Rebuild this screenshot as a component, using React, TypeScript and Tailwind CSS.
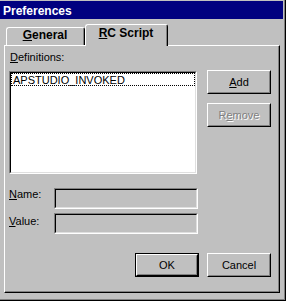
import React from "react";

const font = "font-['Liberation_Sans',Arial,sans-serif]";

function Sunken({ className, children }: { className: string; children?: React.ReactNode }) {
  return (
    <div className={`border border-t-[#808080] border-l-[#808080] border-b-white border-r-white ${className}`}>
      <div className="h-full border border-t-black border-l-black border-b-[#dfdfdf] border-r-[#dfdfdf]">
        {children}
      </div>
    </div>
  );
}

function Button({ children, isDefault }: { children: React.ReactNode; isDefault?: boolean }) {
  const face = (
    <div className="h-full border border-t-white border-l-white border-b-black border-r-black">
      <div className="h-full border border-t-[#c0c0c0] border-l-[#c0c0c0] border-b-[#808080] border-r-[#808080] flex items-center justify-center text-[11px] leading-[13px]">
        {children}
      </div>
    </div>
  );
  if (isDefault) {
    return <div className="w-[64px] h-[24px] border border-black">{face}</div>;
  }
  return <div className="w-[64px] h-[24px]">{face}</div>;
}

export default function App() {
  return (
    <div className={`w-[286px] h-[301px] bg-[#c0c0c0] border-r border-b border-black text-black ${font}`}>
      <div className="h-full border-r border-b border-[#808080] pt-px pr-px flex flex-col">
        {/* title bar */}
        <div className="h-[18px] bg-[#000080] text-white font-bold text-[12px] leading-[14px] pl-[3px] pt-[2px] flex items-center">
          Preferences
        </div>

        {/* tabs */}
        <div className="mt-[5px] h-[21px] pl-[6px] flex items-end">
          <div className="w-[79px] h-[18px] border-l border-t border-white border-r border-r-black rounded-tl-[3px] rounded-tr-[3px]">
            <div className="h-full border-r border-[#808080] flex justify-center font-bold text-[12px] leading-[14px]">
              <span>
                <span className="underline">G</span>eneral
              </span>
            </div>
          </div>
          <div className="relative z-10 -mb-px w-[83px] h-[22px] bg-[#c0c0c0] border-l border-t border-white border-r border-r-black rounded-tl-[3px] rounded-tr-[3px]">
            <div className="h-full border-r border-[#808080] pt-[1px] flex justify-center font-bold text-[12px] leading-[14px]">
              <span>
                <span className="underline">R</span>C Script
              </span>
            </div>
          </div>
        </div>

        {/* tab page */}
        <div className="ml-[4px] w-[276px] h-[248px] border-l border-t border-white border-r border-b border-r-black border-b-black">
          <div className="h-full border-r border-b border-[#808080] px-[4px] text-[11px] leading-[13px]">
            <div className="flex">
              <div className="w-[188px]">
                <div className="mt-[5px] h-[13px] pl-[1px]">
                  <span className="underline">D</span>efinitions:
                </div>
                <Sunken className="mt-[7px] h-[103px] bg-white">
                  <div className="h-[13px] border border-dotted border-black leading-[11px] pl-[1px] pt-[1px]">
                    APSTUDIO_INVOKED
                  </div>
                </Sunken>
              </div>
              <div className="ml-[10px] pt-[24px] flex flex-col gap-[9px]">
                <Button>
                  <span>
                    <span className="underline">A</span>dd
                  </span>
                </Button>
                <Button>
                  <span className="text-[#808080] [text-shadow:1px_1px_0_#ffffff]">
                    R<span className="underline">e</span>move
                  </span>
                </Button>
              </div>
            </div>

            <div className="mt-[14px] flex">
              <div className="w-[45px]">
                <span className="underline">N</span>ame:
              </div>
              <Sunken className="w-[144px] h-[21px] bg-[#c0c0c0]" />
            </div>
            <div className="mt-[4px] flex">
              <div className="w-[45px] pt-[2px]">
                <span className="underline">V</span>alue:
              </div>
              <Sunken className="w-[144px] h-[21px] bg-[#c0c0c0]" />
            </div>

            <div className="mt-[19px] ml-[126px] flex gap-[8px]">
              <Button isDefault>OK</Button>
              <Button>Cancel</Button>
            </div>
          </div>
        </div>
      </div>
    </div>
  );
}
